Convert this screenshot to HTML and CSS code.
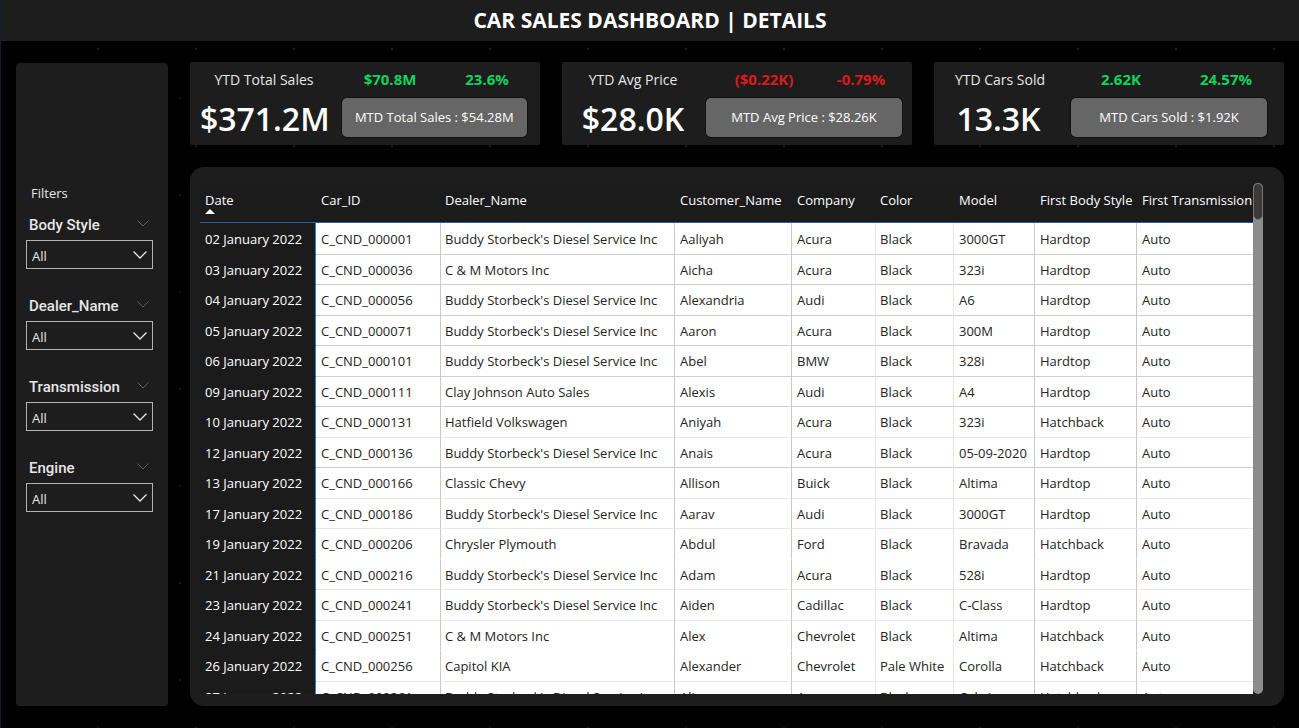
FILE: index.html
```html
<!DOCTYPE html>
<html lang="en">
<head>
<meta charset="utf-8">
<title>Car Sales Dashboard | Details</title>
<link rel="stylesheet" href="styles.css">
</head>
<body>
<header class="topbar"><h1>CAR SALES DASHBOARD | DETAILS</h1></header>
<div class="layout">
  <aside class="sidebar">
    <h2>Filters</h2>
    <div class="filter">
      <div class="filter-head"><label for="body-style">Body Style</label><button type="button" aria-label="Body Style options"><svg viewBox="0 0 12 7"><path d="M.5.5 6 6 11.5.5"/></svg></button></div>
      <div class="picker"><select id="body-style"><option>All</option></select><svg viewBox="0 0 14 8"><path d="M.5.5 7 7 13.5.5"/></svg></div>
    </div>
    <div class="filter">
      <div class="filter-head"><label for="dealer">Dealer_Name</label><button type="button" aria-label="Dealer_Name options"><svg viewBox="0 0 12 7"><path d="M.5.5 6 6 11.5.5"/></svg></button></div>
      <div class="picker"><select id="dealer"><option>All</option></select><svg viewBox="0 0 14 8"><path d="M.5.5 7 7 13.5.5"/></svg></div>
    </div>
    <div class="filter">
      <div class="filter-head"><label for="transmission">Transmission</label><button type="button" aria-label="Transmission options"><svg viewBox="0 0 12 7"><path d="M.5.5 6 6 11.5.5"/></svg></button></div>
      <div class="picker"><select id="transmission"><option>All</option></select><svg viewBox="0 0 14 8"><path d="M.5.5 7 7 13.5.5"/></svg></div>
    </div>
    <div class="filter">
      <div class="filter-head"><label for="engine">Engine</label><button type="button" aria-label="Engine options"><svg viewBox="0 0 12 7"><path d="M.5.5 6 6 11.5.5"/></svg></button></div>
      <div class="picker"><select id="engine"><option>All</option></select><svg viewBox="0 0 14 8"><path d="M.5.5 7 7 13.5.5"/></svg></div>
    </div>
  </aside>
  <main class="content">
    <section class="kpis">
      <article class="kpi sales">
        <div class="kpi-top"><span>YTD Total Sales</span><b class="up">$70.8M</b><b class="up">23.6%</b></div>
        <div class="kpi-main"><strong>$371.2M</strong><div class="mtd">MTD Total Sales : $54.28M</div></div>
      </article>
      <article class="kpi price">
        <div class="kpi-top"><span>YTD Avg Price</span><b class="down">($0.22K)</b><b class="down">-0.79%</b></div>
        <div class="kpi-main"><strong>$28.0K</strong><div class="mtd">MTD Avg Price : $28.26K</div></div>
      </article>
      <article class="kpi sold">
        <div class="kpi-top"><span>YTD Cars Sold</span><b class="up">2.62K</b><b class="up">24.57%</b></div>
        <div class="kpi-main"><strong>13.3K</strong><div class="mtd">MTD Cars Sold : $1.92K</div></div>
      </article>
    </section>
    <section class="panel">
      <div class="table-view">
        <table>
          <colgroup><col class="c-date"><col class="c-id"><col class="c-dealer"><col class="c-customer"><col class="c-company"><col class="c-color"><col class="c-model"><col class="c-body"><col class="c-trans"></colgroup>
          <thead><tr><th class="sorted">Date</th><th>Car_ID</th><th>Dealer_Name</th><th>Customer_Name</th><th>Company</th><th>Color</th><th>Model</th><th>First Body Style</th><th>First Transmission</th></tr></thead>
          <tbody>
            <tr><th>02 January 2022</th><td>C_CND_000001</td><td>Buddy Storbeck's Diesel Service Inc</td><td>Aaliyah</td><td>Acura</td><td>Black</td><td>3000GT</td><td>Hardtop</td><td>Auto</td></tr>
            <tr><th>03 January 2022</th><td>C_CND_000036</td><td>C &amp; M Motors Inc</td><td>Aicha</td><td>Acura</td><td>Black</td><td>323i</td><td>Hardtop</td><td>Auto</td></tr>
            <tr><th>04 January 2022</th><td>C_CND_000056</td><td>Buddy Storbeck's Diesel Service Inc</td><td>Alexandria</td><td>Audi</td><td>Black</td><td>A6</td><td>Hardtop</td><td>Auto</td></tr>
            <tr><th>05 January 2022</th><td>C_CND_000071</td><td>Buddy Storbeck's Diesel Service Inc</td><td>Aaron</td><td>Acura</td><td>Black</td><td>300M</td><td>Hardtop</td><td>Auto</td></tr>
            <tr><th>06 January 2022</th><td>C_CND_000101</td><td>Buddy Storbeck's Diesel Service Inc</td><td>Abel</td><td>BMW</td><td>Black</td><td>328i</td><td>Hardtop</td><td>Auto</td></tr>
            <tr><th>09 January 2022</th><td>C_CND_000111</td><td>Clay Johnson Auto Sales</td><td>Alexis</td><td>Audi</td><td>Black</td><td>A4</td><td>Hardtop</td><td>Auto</td></tr>
            <tr class="faint"><th>10 January 2022</th><td>C_CND_000131</td><td>Hatfield Volkswagen</td><td>Aniyah</td><td>Acura</td><td>Black</td><td>323i</td><td>Hatchback</td><td>Auto</td></tr>
            <tr><th>12 January 2022</th><td>C_CND_000136</td><td>Buddy Storbeck's Diesel Service Inc</td><td>Anais</td><td>Acura</td><td>Black</td><td>05-09-2020</td><td>Hardtop</td><td>Auto</td></tr>
            <tr class="faint"><th>13 January 2022</th><td>C_CND_000166</td><td>Classic Chevy</td><td>Allison</td><td>Buick</td><td>Black</td><td>Altima</td><td>Hardtop</td><td>Auto</td></tr>
            <tr class="faint"><th>17 January 2022</th><td>C_CND_000186</td><td>Buddy Storbeck's Diesel Service Inc</td><td>Aarav</td><td>Audi</td><td>Black</td><td>3000GT</td><td>Hardtop</td><td>Auto</td></tr>
            <tr class="open"><th>19 January 2022</th><td>C_CND_000206</td><td>Chrysler Plymouth</td><td>Abdul</td><td>Ford</td><td>Black</td><td>Bravada</td><td>Hatchback</td><td>Auto</td></tr>
            <tr class="faint"><th>21 January 2022</th><td>C_CND_000216</td><td>Buddy Storbeck's Diesel Service Inc</td><td>Adam</td><td>Acura</td><td>Black</td><td>528i</td><td>Hardtop</td><td>Auto</td></tr>
            <tr class="faint"><th>23 January 2022</th><td>C_CND_000241</td><td>Buddy Storbeck's Diesel Service Inc</td><td>Aiden</td><td>Cadillac</td><td>Black</td><td>C-Class</td><td>Hardtop</td><td>Auto</td></tr>
            <tr class="open"><th>24 January 2022</th><td>C_CND_000251</td><td>C &amp; M Motors Inc</td><td>Alex</td><td>Chevrolet</td><td>Black</td><td>Altima</td><td>Hatchback</td><td>Auto</td></tr>
            <tr class="faint"><th>26 January 2022</th><td>C_CND_000256</td><td>Capitol KIA</td><td>Alexander</td><td>Chevrolet</td><td>Pale White</td><td>Corolla</td><td>Hatchback</td><td>Auto</td></tr>
            <tr><th>27 January 2022</th><td>C_CND_000261</td><td>Buddy Storbeck's Diesel Service Inc</td><td>Alina</td><td>Acura</td><td>Black</td><td>Cabrio</td><td>Hatchback</td><td>Auto</td></tr>
          </tbody>
        </table>
      </div>
      <div class="scrollbar"><div class="thumb"></div></div>
    </section>
  </main>
</div>
</body>
</html>
```
FILE: styles.css
```css
* { box-sizing: border-box; }

body {
  margin: 0;
  height: 100vh;
  display: flex;
  flex-direction: column;
  overflow: hidden;
  border-left: 1px solid #171b30;
  background-color: #000;
  background-image:
    radial-gradient(circle at 1px 1px, #1c1c1c 1px, transparent 1px),
    radial-gradient(circle at 1px 1px, #161616 1px, transparent 1px);
  background-size: 98px 97px, 98px 97px;
  background-position: 97px 48px, 81px 0;
  color: #fff;
  font: 13px/20px "Open Sans", "Noto Sans", sans-serif;
}

h1, h2 { margin: 0; }

.topbar {
  flex: none;
  height: 41px;
  background: #1d1d1d;
  text-align: center;
}

h1 { font-size: 21px; font-weight: 700; line-height: 40px; }

.layout {
  flex: 1;
  min-height: 0;
  display: flex;
  gap: 22px;
  padding: 21px 15px 22px;
}

.sidebar {
  flex: none;
  width: 152px;
  margin-top: 1px;
  padding: 120px 15px 0 10px;
  border-radius: 4px;
  background: #1d1d1d;
}

h2 {
  margin: 0 0 12px 5px;
  font-size: 13px;
  font-weight: 400;
  color: #e6e6e6;
}

.filter { margin-bottom: 27px; }

.filter-head {
  display: flex;
  justify-content: space-between;
  align-items: center;
  height: 20px;
  margin-bottom: 5px;
  padding: 0 4px 0 3px;
}

.filter-head label {
  font: 500 15px/20px Roboto, "Open Sans", sans-serif;
  color: #e6e6e6;
}

.filter-head button {
  display: flex;
  padding: 0 0 3px;
  border: 0;
  background: none;
}

.filter-head svg { width: 12px; height: 7px; stroke: #605e5c; }

svg { fill: none; }

.picker { position: relative; }

.picker select {
  display: block;
  width: 100%;
  height: 29px;
  padding: 3px 5px 0;
  border: 1px solid #b3b3b3;
  border-radius: 0;
  appearance: none;
  background: #1d1d1d;
  color: #e6e6e6;
  font: 13px "Open Sans", sans-serif;
}

.picker svg {
  position: absolute;
  right: 6px;
  top: 11px;
  width: 14px;
  height: 8px;
  stroke: #e6e6e6;
  stroke-width: 1.3;
  pointer-events: none;
}

.content {
  flex: 1;
  min-width: 0;
  display: flex;
  flex-direction: column;
  gap: 22px;
}

.kpis {
  display: grid;
  grid-template-columns: repeat(3, 1fr);
  gap: 22px;
}

.kpi {
  padding: 8px 0;
  border-radius: 2px;
  background: #1d1d1d;
}

.kpi-top {
  display: grid;
  justify-items: center;
  height: 20px;
  font-size: 14px;
  margin-bottom: 8px;
}

.sales .kpi-top { grid-template-columns: 148fr 104fr 90fr 8fr; }
.price .kpi-top { grid-template-columns: 142fr 120fr 74fr 14fr; }
.sold .kpi-top { grid-template-columns: 132fr 110fr 100fr 8fr; }

.kpi-top span { color: #e6e6e6; }
.kpi-top b { font-size: 15px; font-weight: 700; line-height: 18px; }
.kpi-top .up { color: #12d35d; }
.kpi-top .down { color: #dc1a1a; }

.kpi-main { display: flex; align-items: center; }

.kpi-main strong {
  flex: 1;
  padding-top: 3px;
  text-align: center;
  font-size: 32px;
  font-weight: 600;
  line-height: 36px;
}

.mtd {
  width: 56%;
  border-radius: 5px;
  box-shadow: 0 0 0 1px #111;
  background: #666;
  text-align: center;
  line-height: 39px;
}

.sales .mtd { width: 53%; margin-right: 13px; }
.price .mtd { margin-right: 10px; }
.sold .mtd { margin-right: 17px; }
.sales strong, .price strong { padding-right: 2px; }
.sold strong { padding-right: 8px; }

.panel {
  flex: 1;
  min-height: 0;
  display: flex;
  padding: 16px 21px 12px 10px;
  border-radius: 14px;
  background: #1d1d1d;
}

.table-view { flex: 1; min-width: 0; overflow: hidden; }

table {
  width: 100%;
  table-layout: fixed;
  border-collapse: separate;
  border-spacing: 0;
}

.c-date { width: 116px; }
.c-id { width: 125px; }
.c-dealer { width: 234px; }
.c-customer { width: 117px; }
.c-company { width: 84px; }
.c-color { width: 78px; }
.c-model { width: 81px; }
.c-body { width: 102px; }
.c-trans { width: 116px; }

th, td {
  padding: 0 0 0 5px;
  text-align: left;
  font-weight: 400;
  white-space: nowrap;
}

tr > :nth-child(3), tr > :nth-child(6) { padding-left: 4px; }

thead th {
  position: relative;
  height: 40px;
  padding-bottom: 6px;
  border-bottom: 1px solid #1b62a8;
  background: #1b1b1b;
}

.sorted::after {
  content: "";
  position: absolute;
  left: 5px;
  bottom: 8px;
  border: 5px solid transparent;
  border-top: 0;
  border-bottom-color: #fff;
}

tbody tr { height: 31px; }
tbody tr:first-child { height: 32px; }
tbody tr:nth-child(even) { height: 30px; }

tbody th {
  border-right: 1px solid #2a84d8;
  border-bottom: 1px solid #1b1b1b;
  background: #1b1b1b;
}

td {
  border-right: 1px solid #c8c8c8;
  border-bottom: 1px solid #cecece;
  background: #fff;
  color: #252423;
}

.faint td { border-bottom-color: #e8e8e8; }
.open td { border-bottom-color: #fff; }

td:last-child { border-right: 0; }
td:nth-child(5), td:nth-child(6) { border-right-color: #e6e6e6; }

.scrollbar {
  flex: none;
  width: 10px;
  border-radius: 5px;
  background: #8c8c8c;
}

.thumb {
  height: 37px;
  border: 1px solid #777;
  border-radius: 5px;
  background: #3b3a39;
}
```
